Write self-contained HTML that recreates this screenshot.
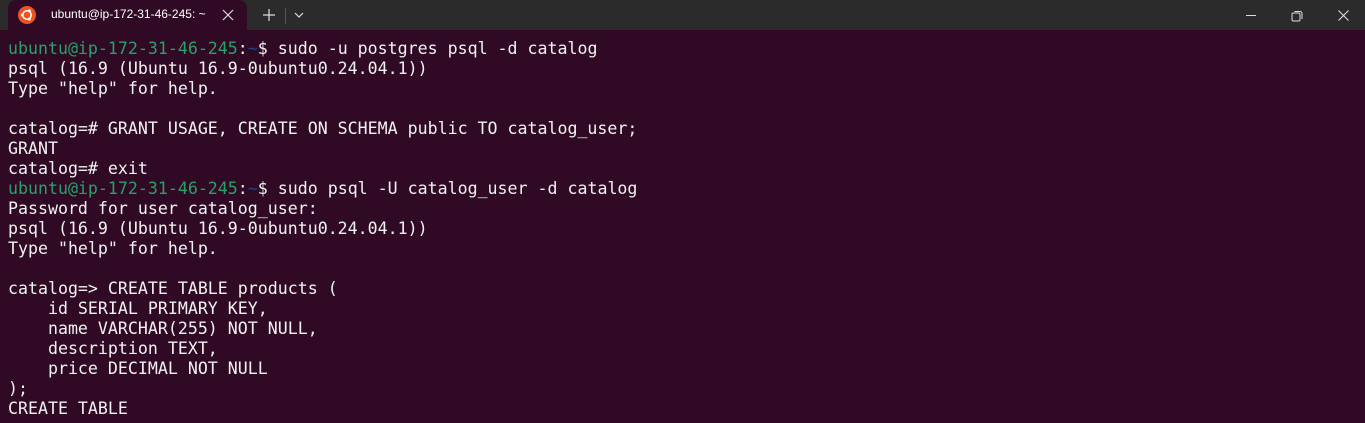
<!DOCTYPE html>
<html><head><meta charset="utf-8"><style>
html,body{margin:0;padding:0;width:1365px;height:423px;overflow:hidden;background:#300a24}
.bar{position:absolute;left:0;top:0;width:1365px;height:30px;background:#2b2b2b}
.tab{position:absolute;left:8px;top:0;width:239px;height:30px;background:#300a24;border-radius:8px 8px 0 0}
.ico{position:absolute;left:10px;top:6px;width:18px;height:18px;border-radius:50%;background:#e95420}
.ttl{position:absolute;left:43px;top:7px;font:12px "Liberation Sans",sans-serif;color:#fff}
pre{position:absolute;left:8px;top:39px;margin:0;font:16.6px/20px "DejaVu Sans Mono","Liberation Mono",monospace;color:#f2f2f2}
.g{color:#26a269;}.b{color:#12488b}
</style></head><body>
<div class="bar"></div>
<div class="tab"><div class="ico"><svg width="18" height="18" viewBox="0 0 18 18"><circle cx="9" cy="9" r="4.2" fill="none" stroke="#fff" stroke-width="1.5"/><circle cx="4.2" cy="9" r="1.4" fill="#fff"/><circle cx="11.4" cy="4.8" r="1.4" fill="#fff"/><circle cx="11.4" cy="13.2" r="1.4" fill="#fff"/></svg></div>
<div class="ttl">ubuntu@ip-172-31-46-245: ~</div>
<svg style="position:absolute;left:214px;top:9px" width="12" height="12"><path d="M1 1L11 11M11 1L1 11" stroke="#ddd" stroke-width="1.2"/></svg></div>
<svg style="position:absolute;left:263px;top:9px" width="12" height="12"><path d="M6 0V12M0 6H12" stroke="#ddd" stroke-width="1.2"/></svg>
<div style="position:absolute;left:285px;top:8px;width:1px;height:16px;background:#555"></div>
<svg style="position:absolute;left:294px;top:12px" width="10" height="6"><path d="M1 1L5 5L9 1" fill="none" stroke="#ddd" stroke-width="1.2"/></svg>
<div style="position:absolute;left:1246px;top:15px;width:10px;height:1px;background:#ddd"></div>
<svg style="position:absolute;left:1291px;top:10px" width="12" height="12"><rect x="1" y="3" width="8" height="8" rx="1.5" fill="none" stroke="#ddd"/><path d="M3.5 1.5H9a2 2 0 0 1 2 2V9" fill="none" stroke="#ddd"/></svg>
<svg style="position:absolute;left:1338px;top:10px" width="11" height="11"><path d="M0.5 0.5L10.5 10.5M10.5 0.5L0.5 10.5" stroke="#ddd" stroke-width="1.1"/></svg>
<pre><span class="g">ubuntu@ip-172-31-46-245</span>:<span class="b">~</span>$ sudo -u postgres psql -d catalog
psql (16.9 (Ubuntu 16.9-0ubuntu0.24.04.1))
Type "help" for help.

catalog=# GRANT USAGE, CREATE ON SCHEMA public TO catalog_user;
GRANT
catalog=# exit
<span class="g">ubuntu@ip-172-31-46-245</span>:<span class="b">~</span>$ sudo psql -U catalog_user -d catalog
Password for user catalog_user:
psql (16.9 (Ubuntu 16.9-0ubuntu0.24.04.1))
Type "help" for help.

catalog=> CREATE TABLE products (
    id SERIAL PRIMARY KEY,
    name VARCHAR(255) NOT NULL,
    description TEXT,
    price DECIMAL NOT NULL
);
CREATE TABLE</pre>
</body></html>
